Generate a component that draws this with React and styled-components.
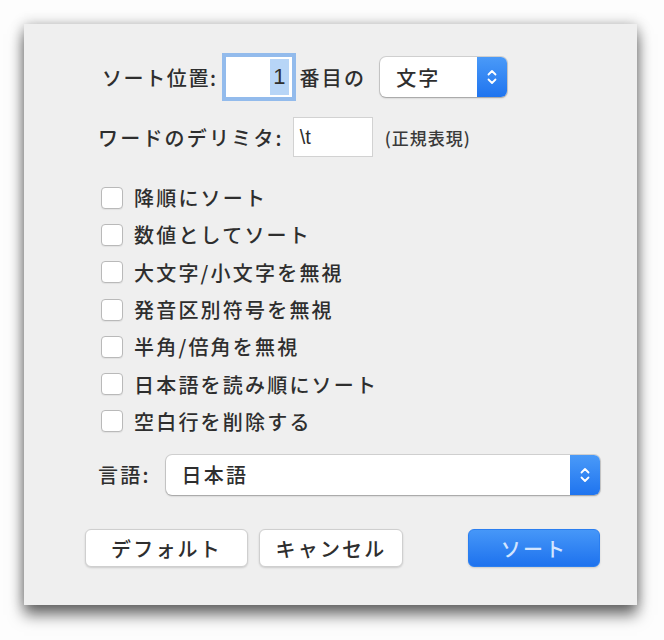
import React from "react";
import styled, { createGlobalStyle } from "styled-components";

const Global = createGlobalStyle`
  html, body {
    margin: 0;
    padding: 0;
    background: #fdfdfd;
  }
  body {
    font-family: "Noto Sans CJK JP", "Noto Sans", sans-serif;
    color: #2e2e2e;
  }
`;

const Page = styled.div`
  width: 664px;
  height: 640px;
  padding: 24px 0 0 24px;
  box-sizing: border-box;
`;

const Sheet = styled.div`
  width: 613px;
  height: 581px;
  box-sizing: border-box;
  background: #efefef;
  box-shadow: 0 10px 14px rgba(0, 0, 0, 0.55), 0 0 12px rgba(0, 0, 0, 0.25);
  padding: 29px 37px 0 61px;
  display: flex;
  flex-direction: column;
`;

const Form = styled.div`
  padding-left: 13px;
  display: flex;
  flex-direction: column;
`;

const Row = styled.div`
  display: flex;
  align-items: center;
  height: ${(p) => p.h || 40}px;
  margin-top: ${(p) => p.mt || 0}px;
  padding-left: ${(p) => p.indent || 0}px;
`;

const Label = styled.span`
  font-size: 20px;
  font-weight: 500;
  letter-spacing: ${(p) => p.ls || 2.2}px;
  white-space: nowrap;
  margin-right: ${(p) => p.mr || 0}px;
`;

const Note = styled.span`
  font-size: 17px;
  font-weight: 500;
  letter-spacing: 1px;
  margin-left: 12px;
  color: #3a3a3a;
`;

const NumberField = styled.div`
  width: 66px;
  height: 40px;
  box-sizing: border-box;
  background: #fff;
  box-shadow: 0 0 0 4px #93bbec;
  display: flex;
  justify-content: flex-end;
  align-items: stretch;
  padding: 2px 3px 2px 0;
  margin: 0 8px 0 8px;
`;

const Selection = styled.span`
  background: #b7d5f7;
  font-size: 22px;
  font-family: "Liberation Sans", sans-serif;
  color: #2e2e2e;
  padding: 0 3px;
  display: flex;
  align-items: center;
`;

const TextField = styled.div`
  width: ${(p) => p.w}px;
  height: 40px;
  box-sizing: border-box;
  background: #fff;
  border: 1px solid #d2d2d2;
  font-size: 20px;
  font-family: "Liberation Sans", sans-serif;
  display: flex;
  align-items: center;
  padding-left: 6px;
  margin-left: 9px;
`;

const Popup = styled.div`
  width: ${(p) => p.w}px;
  height: 40px;
  box-sizing: border-box;
  display: flex;
  border-radius: 6px;
  background: #fff;
  box-shadow: 0 0 0 1px rgba(0, 0, 0, 0.12), 0 1px 2px rgba(0, 0, 0, 0.25);
  overflow: hidden;
  margin-left: ${(p) => p.ml || 0}px;
`;

const PopupText = styled.span`
  flex: 1;
  font-size: 20px;
  font-weight: 500;
  letter-spacing: 2.2px;
  display: flex;
  align-items: center;
  padding-left: 16px;
`;

const Stepper = styled.span`
  width: 30px;
  background: linear-gradient(#4a9af8, #1f74ef);
  display: flex;
  align-items: center;
  justify-content: center;
`;

const Checks = styled.div`
  margin-top: 22px;
  display: flex;
  flex-direction: column;
  padding-left: 3px;
`;

const CheckRow = styled.label`
  display: flex;
  align-items: center;
  height: 37.3px;
`;

const Box = styled.span`
  width: 22px;
  height: 22px;
  box-sizing: border-box;
  border: 1px solid #b9b9b9;
  border-radius: 4px;
  background: #fff;
  margin-right: 11px;
  box-shadow: 0 1px 1px rgba(0, 0, 0, 0.06);
`;

const Buttons = styled.div`
  display: flex;
  align-items: center;
  margin-top: 34px;
  height: 38px;
`;

const Button = styled.button`
  width: ${(p) => p.w}px;
  height: 38px;
  border-radius: 6px;
  font-family: inherit;
  font-size: 20px;
  font-weight: 500;
  letter-spacing: 2.2px;
  padding: 0;
  margin-right: ${(p) => p.mr || 0}px;
  margin-left: ${(p) => p.ml || 0}px;
  color: ${(p) => (p.primary ? "#d3e5ff" : "#2e2e2e")};
  background: ${(p) => (p.primary ? "linear-gradient(#4697f8, #1e72ee)" : "#fff")};
  border: 1px solid ${(p) => (p.primary ? "#2a7ef0" : "#cfcfcf")};
  box-shadow: 0 1px 2px rgba(0, 0, 0, 0.15);
`;

const Chevrons = () => (
  <svg width="12" height="20" viewBox="0 0 12 20">
    <path d="M2.5 7.5 L6 4 L9.5 7.5 M2.5 12.5 L6 16 L9.5 12.5" fill="none" stroke="#fff" strokeWidth="1.8" strokeLinecap="round" strokeLinejoin="round" />
  </svg>
);

const options = [
  "降順にソート",
  "数値としてソート",
  "大文字/小文字を無視",
  "発音区別符号を無視",
  "半角/倍角を無視",
  "日本語を読み順にソート",
  "空白行を削除する",
];

export default function App() {
  return (
    <Page>
      <Global />
      <Sheet>
        <Form>
          <Row h={48} indent={4}>
            <Label ls={1.6}>ソート位置:</Label>
            <NumberField>
              <Selection>1</Selection>
            </NumberField>
            <Label>番目の</Label>
            <Popup w={127} ml={14}>
              <PopupText>文字</PopupText>
              <Stepper>
                <Chevrons />
              </Stepper>
            </Popup>
          </Row>
          <Row mt={16}>
            <Label ls={2.2}>ワードのデリミタ:</Label>
            <TextField w={80}>\t</TextField>
            <Note>(正規表現)</Note>
          </Row>
          <Checks>
            {options.map((o) => (
              <CheckRow key={o}>
                <Box />
                <Label>{o}</Label>
              </CheckRow>
            ))}
          </Checks>
          <Row mt={14} h={41}>
            <Label mr={15}>言語:</Label>
            <Popup w={435}>
              <PopupText>日本語</PopupText>
              <Stepper>
                <Chevrons />
              </Stepper>
            </Popup>
          </Row>
        </Form>
        <Buttons>
          <Button w={163} mr={11}>デフォルト</Button>
          <Button w={144}>キャンセル</Button>
          <Button w={132} ml={65} primary>ソート</Button>
        </Buttons>
      </Sheet>
    </Page>
  );
}
